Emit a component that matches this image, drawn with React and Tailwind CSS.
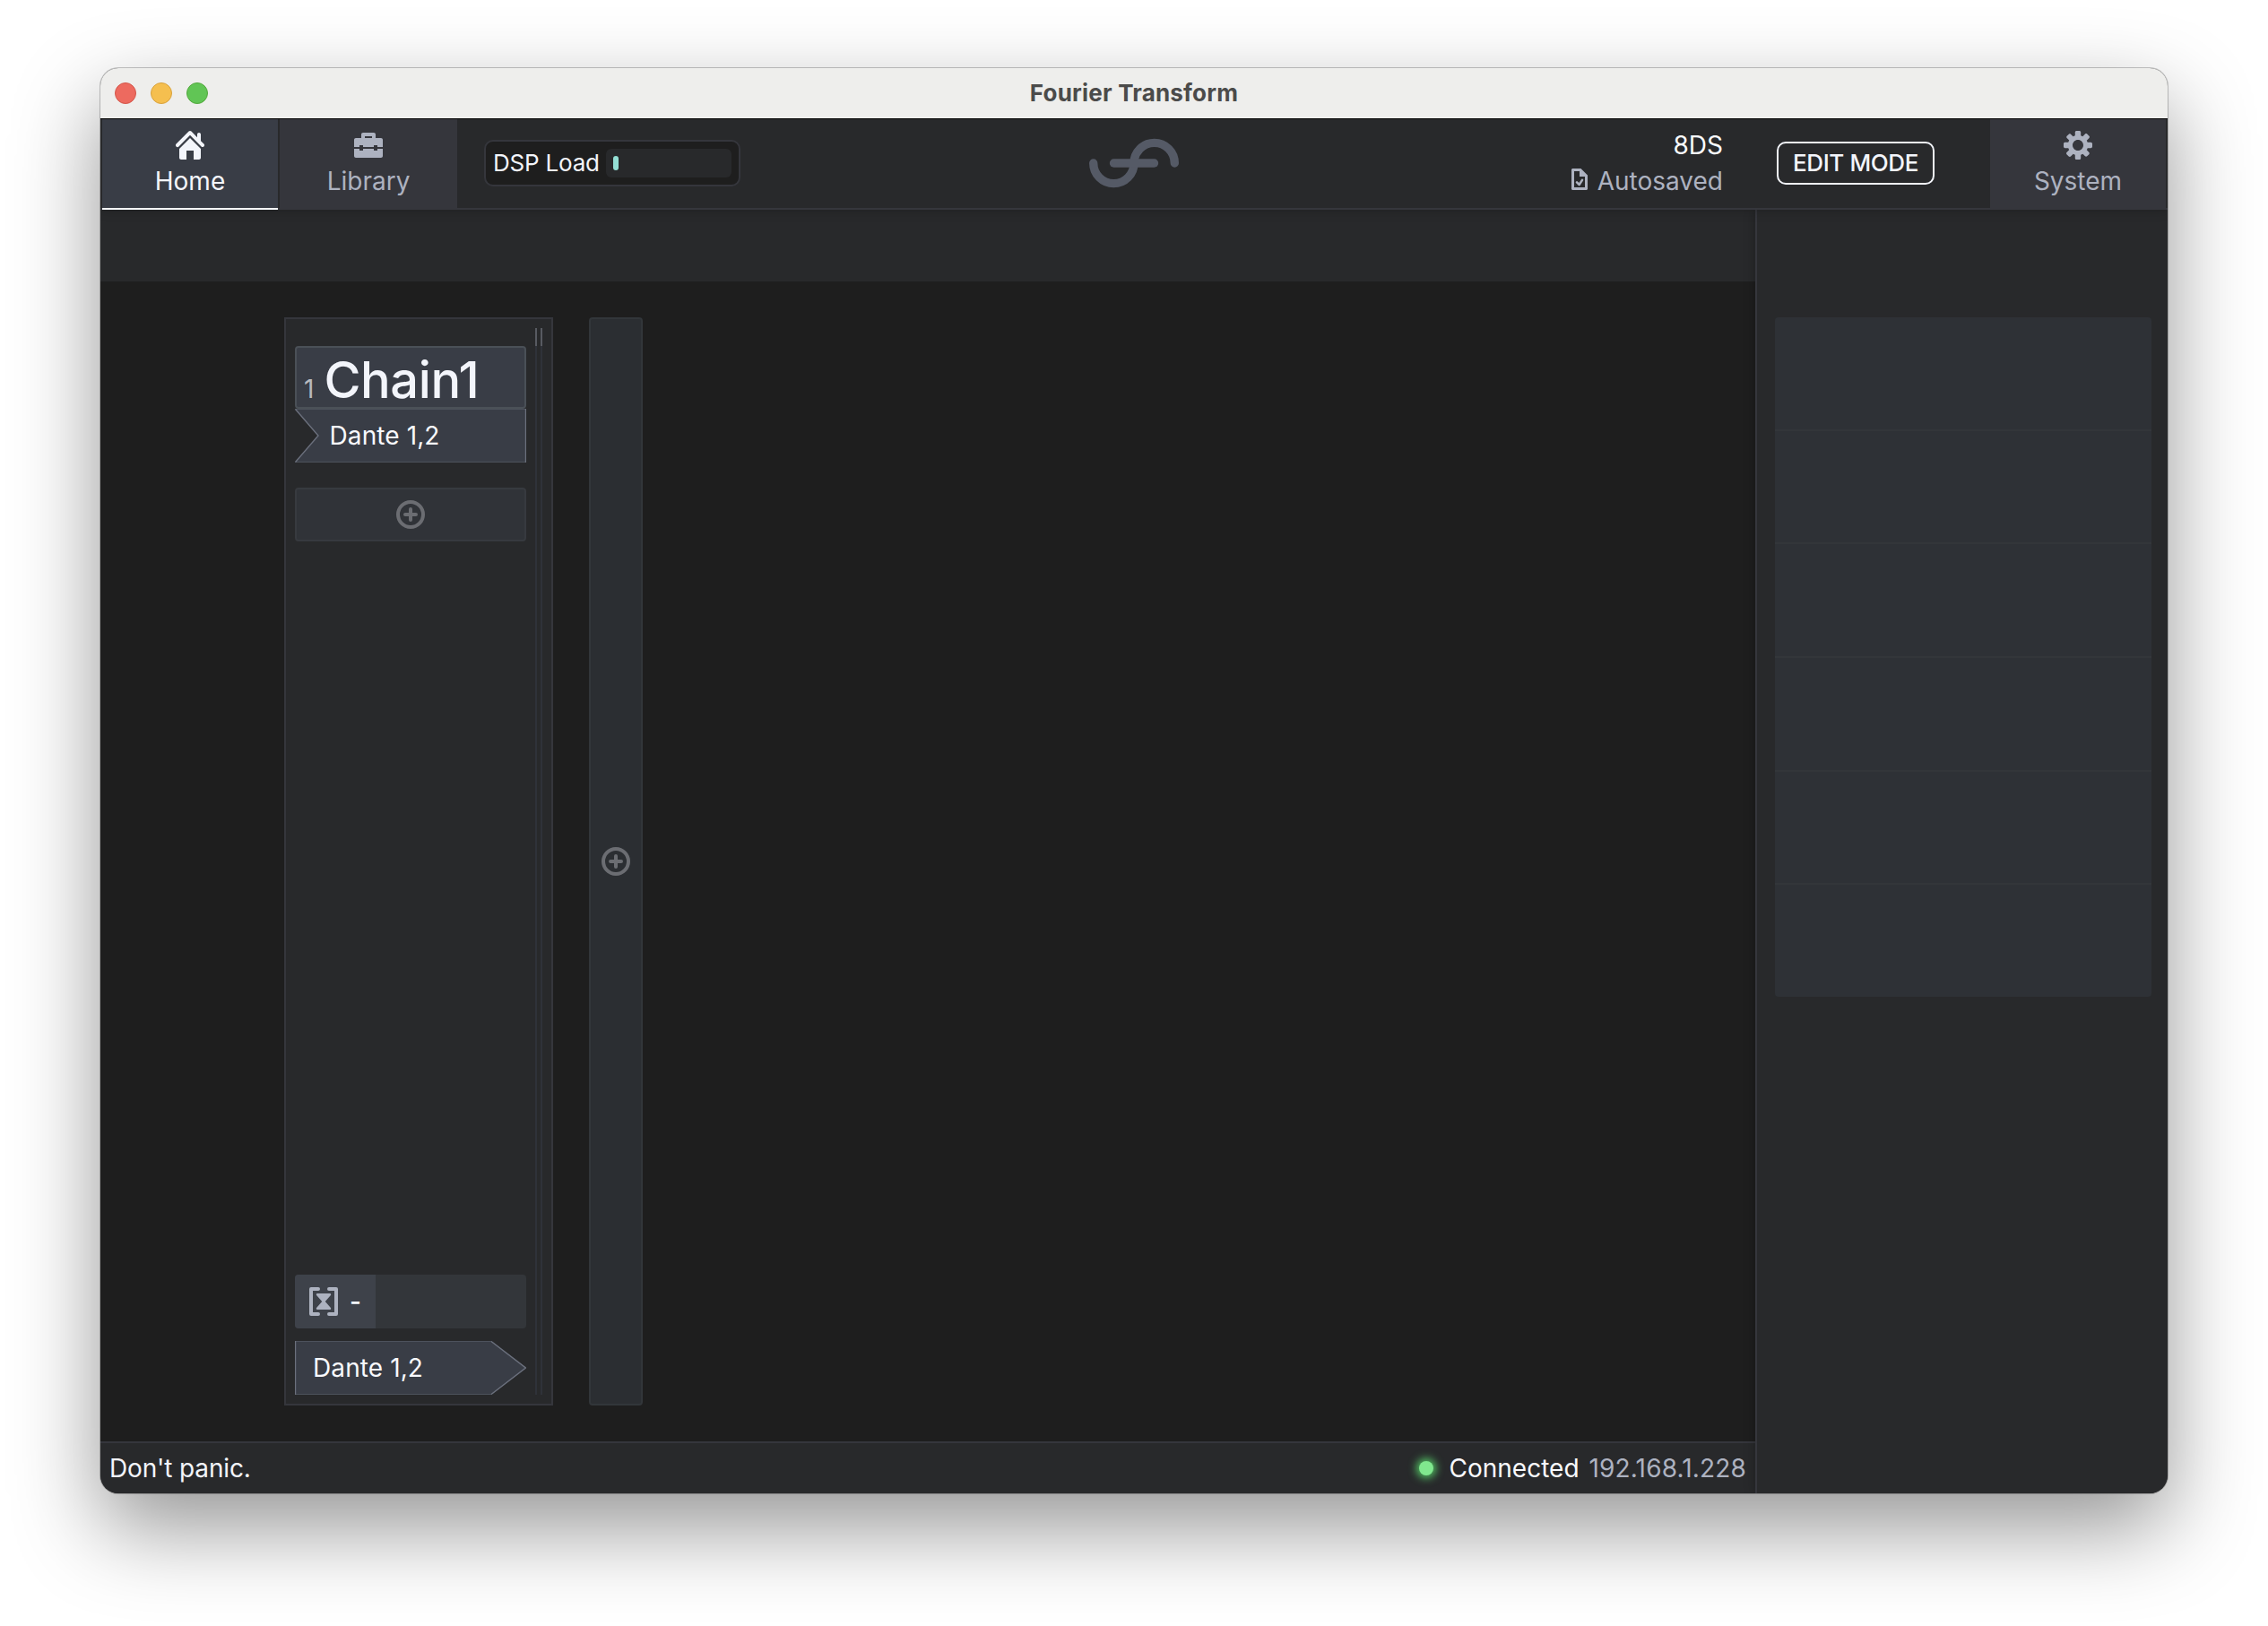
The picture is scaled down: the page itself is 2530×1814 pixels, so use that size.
const HomeIcon = () => (
  <svg className="size-8" viewBox="0 0 16 16" fill="currentColor">
    <path d="M2 10v5c0 .55.45 1 1 1h3v-5h4v5h3c.55 0 1-.45 1-1v-5L8 4l-6 6zm13.71-2.71L14 5.59V2c0-.55-.45-1-1-1s-1 .45-1 1v1.59L8.71.29C8.53.11 8.28 0 8 0s-.53.11-.71.29l-7 7a1.003 1.003 0 001.42 1.42L8 2.41l6.29 6.29c.18.19.43.3.71.3a1.003 1.003 0 00.71-1.71z" />
  </svg>
);

const ToolboxIcon = () => (
  <svg className="size-8" viewBox="0 0 16 16" fill="currentColor" fillRule="evenodd">
    <path d="M4 4V2c0-.55.45-1 1-1h6c.55 0 1 .45 1 1v2h3c.55 0 1 .45 1 1v4h-3V8h-2v1H5V8H3v1H0V5c0-.55.45-1 1-1h3zm2 0h4V3H6v1z" />
    <path d="M0 10h3v1h2v-1h6v1h2v-1h3v4c0 .55-.45 1-1 1H1c-.55 0-1-.45-1-1v-4z" />
  </svg>
);

const CogIcon = () => (
  <svg className="size-8" viewBox="0 0 16 16" fill="currentColor">
    <path d="M15.19 6.39h-1.85c-.11-.37-.27-.71-.45-1.04l1.36-1.36c.31-.31.31-.82 0-1.13l-1.13-1.13c-.31-.31-.82-.31-1.13 0l-1.36 1.36c-.33-.17-.67-.33-1.04-.44V.79c0-.44-.36-.8-.8-.8h-1.6c-.44 0-.8.36-.8.8v1.86c-.39.12-.75.28-1.1.47l-1.3-1.3c-.3-.3-.79-.3-1.09 0L1.82 2.91c-.3.3-.3.79 0 1.09l1.3 1.3c-.2.34-.36.7-.48 1.09H.79c-.44 0-.8.36-.8.8v1.6c0 .44.36.8.8.8h1.85c.11.37.27.71.45 1.04l-1.36 1.36c-.31.31-.31.82 0 1.13l1.13 1.13c.31.31.82.31 1.13 0l1.36-1.36c.33.18.67.33 1.04.44v1.86c0 .44.36.8.8.8h1.6c.44 0 .8-.36.8-.8v-1.86c.39-.12.75-.28 1.1-.47l1.3 1.3c.3.3.79.3 1.09 0l1.09-1.09c.3-.3.3-.79 0-1.09l-1.3-1.3c.19-.35.36-.71.48-1.1h1.85c.44 0 .8-.36.8-.8v-1.6a.816.816 0 00-.81-.79zM8 11c-1.66 0-3-1.34-3-3s1.34-3 3-3 3 1.34 3 3-1.34 3-3 3z" />
  </svg>
);

const SavedIcon = () => (
  <svg className="size-6 -translate-y-0.5" viewBox="0 0 16 16" fill="currentColor">
    <path d="M9 0H3c-.55 0-1 .45-1 1v14c0 .55.45 1 1 1h10c.55 0 1-.45 1-1V5L9 0zm3 14H4V2h4v4h4v8z" />
    <path d="M6 10.2l1.8 1.8L10 8.6" fill="none" stroke="currentColor" strokeWidth="1.7" strokeLinecap="round" strokeLinejoin="round" />
  </svg>
);

const AddIcon = () => (
  <svg className="size-8 text-[#6b6d72]" viewBox="0 0 16 16" fill="none" stroke="currentColor" strokeWidth="2">
    <circle cx="8" cy="8" r="7" />
    <path d="M8 5v6M5 8h6" strokeLinecap="round" />
  </svg>
);

const LatencyIcon = () => (
  <svg className="size-8 text-[#adb2c0]" viewBox="0 0 16 16" fill="none" stroke="currentColor" strokeWidth="2" strokeLinecap="round" strokeLinejoin="round">
    <path d="M5 1H1v14h4M11 1h4v14h-4" />
    <path d="M4.5 4.1h7L8.1 8l3.4 3.9h-7L7.9 8z" fill="currentColor" strokeWidth="1.2" />
  </svg>
);

const Logo = () => (
  <svg className="-mt-px h-14 w-[100px]" viewBox="0 0 100 56" fill="none" stroke="#555a66" strokeWidth="9.4" strokeLinecap="round">
    <path d="M4.7 28a22.65 22.65 0 0 0 45.3 0a22.65 22.65 0 0 1 45.3 0" />
    <path d="M27.5 28h45" />
  </svg>
);

function Tab({ icon, label, className }) {
  return (
    <div className={`flex flex-col items-center gap-[7px] pt-[13px] ${className}`}>
      {icon}
      <span>{label}</span>
    </div>
  );
}

function TitleBar() {
  return (
    <div className="relative z-30 grid h-[57px] shrink-0 grid-cols-3 items-center border-b border-black bg-[#eeeeec]">
      <div className="flex gap-4 pl-4">
        <span className="size-6 rounded-full border border-[#d35549] bg-[#ed6a5f]" />
        <span className="size-6 rounded-full border border-[#d8a13c] bg-[#f5bf4f]" />
        <span className="size-6 rounded-full border border-[#52a83c] bg-[#61c555]" />
      </div>
      <span className="text-center text-[26px] leading-8 font-bold tracking-[0.2px] text-[#4b4b4a]">Fourier Transform</span>
    </div>
  );
}

function Toolbar() {
  return (
    <div className="relative z-20 grid h-[101px] shrink-0 grid-cols-[1fr_auto_1fr] bg-[#28292b] shadow-[0_0_12px_rgba(0,0,0,0.25)]">
      <div className="flex border-b-2 border-[#35363c] pl-0.5">
        <Tab icon={<HomeIcon />} label="Home" className="-mb-0.5 w-[196px] border-b-2 border-[#f5f8fc] bg-[#393d46] text-[#f3f5fb]" />
        <Tab icon={<ToolboxIcon />} label="Library" className="ml-0.5 w-[198px] bg-[#35363c] text-[#adb2c0]" />
        <div className="mt-[23px] ml-[30px] flex h-[52px] w-[286px] items-center justify-between rounded-[10px] border-2 border-[#35363c] bg-[#1e1e1e] px-2">
          <span className="text-[26px] leading-8 tracking-[-0.2px] text-[#f3f5fb]">DSP Load</span>
          <div className="h-8 w-[140px] rounded-md bg-[#28292b] p-2">
            <div className="h-4 w-1.5 rounded-[3px] bg-[#94dfd5]" />
          </div>
        </div>
      </div>
      <div className="flex items-center border-b-2 border-[#35363c]">
        <Logo />
      </div>
      <div className="flex justify-end border-b-2 border-[#35363c] pr-0.5">
        <div className="flex flex-col items-end gap-1.5 pt-3">
          <span className="text-[#f9fafd]">8DS</span>
          <span className="flex items-center gap-2 text-[#adb2c0]">
            <SavedIcon />
            Autosaved
          </span>
        </div>
        <div className="mt-[25px] mr-[62px] ml-[60px] flex h-12 w-[176px] items-center justify-center rounded-[10px] border-2 border-[#f3f5fb] text-[26px] leading-8 font-medium tracking-[-0.4px] whitespace-nowrap text-[#f3f5fb]">
          EDIT MODE
        </div>
        <Tab icon={<CogIcon />} label="System" className="w-[196px] bg-[#35363c] text-[#adb2c0]" />
      </div>
    </div>
  );
}

function InputPort({ label }) {
  return (
    <div className="relative flex h-[60px] items-center pl-[38.5px]">
      <svg className="absolute inset-0 size-full" viewBox="0 0 258 60">
        <path d="M0 0H258V60H0L26 30z" fill="#393d46" />
        <path d="M0 .5H258M258 59.5H0" stroke="#4d525c" />
        <path d="M.5 .5L26 30L.5 59.5M257.5 0V60" stroke="#6b707d" strokeWidth="1.4" fill="none" />
      </svg>
      <span className="relative tracking-[0.1px] text-[#f8f9fd]">{label}</span>
    </div>
  );
}

function OutputPort({ label }) {
  return (
    <div className="relative mt-3.5 flex h-[60px] items-center pl-5">
      <svg className="absolute inset-0 size-full" viewBox="0 0 258 60">
        <path d="M0 0H219L258 30L219 60H0z" fill="#393d46" />
        <path d="M0 .5H219M0 59.5H219" stroke="#4d525c" />
        <path d="M.5 0V60M219 .5L257.4 30L219 59.5" stroke="#6b707d" strokeWidth="1.4" fill="none" />
      </svg>
      <span className="relative tracking-[0.1px] text-[#f8f9fd]">{label}</span>
    </div>
  );
}

const Meter = () => (
  <div className="w-0.5 bg-[#2f3239]">
    <div className="h-5 bg-[#575a61]" />
  </div>
);

function Chain() {
  return (
    <div className="flex h-[1214px] w-[300px] border-2 border-[#35363c] bg-[#28292b] p-2.5">
      <div className="flex w-[258px] flex-col pt-5">
        <div className="flex h-[70px] items-baseline gap-[11px] rounded border-2 border-[#4a5057] bg-[#393d46] pt-[3px] pl-2">
          <span className="text-[#b8b9be]">1</span>
          <span className="text-[56px] leading-[66px] font-medium tracking-[-0.4px] text-[#f3f5fb]">Chain1</span>
        </div>
        <InputPort label="Dante 1,2" />
        <div className="mt-7 flex h-[60px] items-center justify-center rounded border-2 border-[#373a3f] bg-[#303338]">
          <AddIcon />
        </div>
        <div className="mt-auto flex h-[60px] overflow-hidden rounded bg-[#33363a]">
          <div className="flex w-[90px] items-center gap-[13px] bg-[#3e424a] pl-4">
            <LatencyIcon />
            <span className="font-medium text-[#f3f5fb]">-</span>
          </div>
        </div>
        <OutputPort label="Dante 1,2" />
      </div>
      <div className="ml-2.5 flex gap-1">
        <Meter />
        <Meter />
      </div>
    </div>
  );
}

function StatusBar() {
  return (
    <div className="flex h-[58px] items-center border-t-2 border-[#35363c] bg-[#28292b] px-2.5">
      <span className="tracking-[-0.15px] text-[#f3f5fb]">Don't panic.</span>
      <span className="mr-[18px] ml-auto size-4 rounded-full bg-[#80e88e] shadow-[0_0_10px_3px_rgba(88,214,106,0.9)]" />
      <span className="mr-[11px] text-[#f9fafd]">Connected</span>
      <span className="tracking-[0.15px] text-[#adb2c0]">192.168.1.228</span>
    </div>
  );
}

const SLOTS = [1, 2, 3, 4, 5, 6];

export default function App() {
  return (
    <div className="h-[1814px] w-[2530px] overflow-hidden bg-white pt-[76px] pl-[112px] font-[Inter,sans-serif] text-[28px] leading-[34px]">
      <div className="h-[1590px] w-[2306px] rounded-[20px] shadow-[0_0_0_1px_rgba(0,0,0,0.22),0_38px_96px_rgba(0,0,0,0.42)]">
        <div className="flex h-full flex-col overflow-hidden rounded-[20px] bg-[#28292b]">
          <TitleBar />
          <Toolbar />
          <div className="flex flex-1">
            <div className="flex w-[1846px] flex-col">
              <div className="h-20 bg-[#28292b]" />
              <div className="flex flex-1 gap-10 bg-[#1e1e1e] pt-10 pl-[205px]">
                <Chain />
                <div className="flex h-[1214px] w-[60px] items-center justify-center rounded border-2 border-[#32363a] bg-[#2b2e32]">
                  <AddIcon />
                </div>
              </div>
              <StatusBar />
            </div>
            <div className="relative z-10 flex-1 border-l-2 border-[#35363c] bg-[#28292b] pt-[120px] pr-[18px] pl-5 shadow-[0_0_12px_rgba(0,0,0,0.25)]">
              <div className="flex h-[758px] flex-col overflow-hidden rounded bg-[#2e3136]">
                {SLOTS.map((slot) => (
                  <div key={slot} className="flex-1 border-[#33363a] not-first:border-t-2" />
                ))}
              </div>
            </div>
          </div>
        </div>
      </div>
    </div>
  );
}
